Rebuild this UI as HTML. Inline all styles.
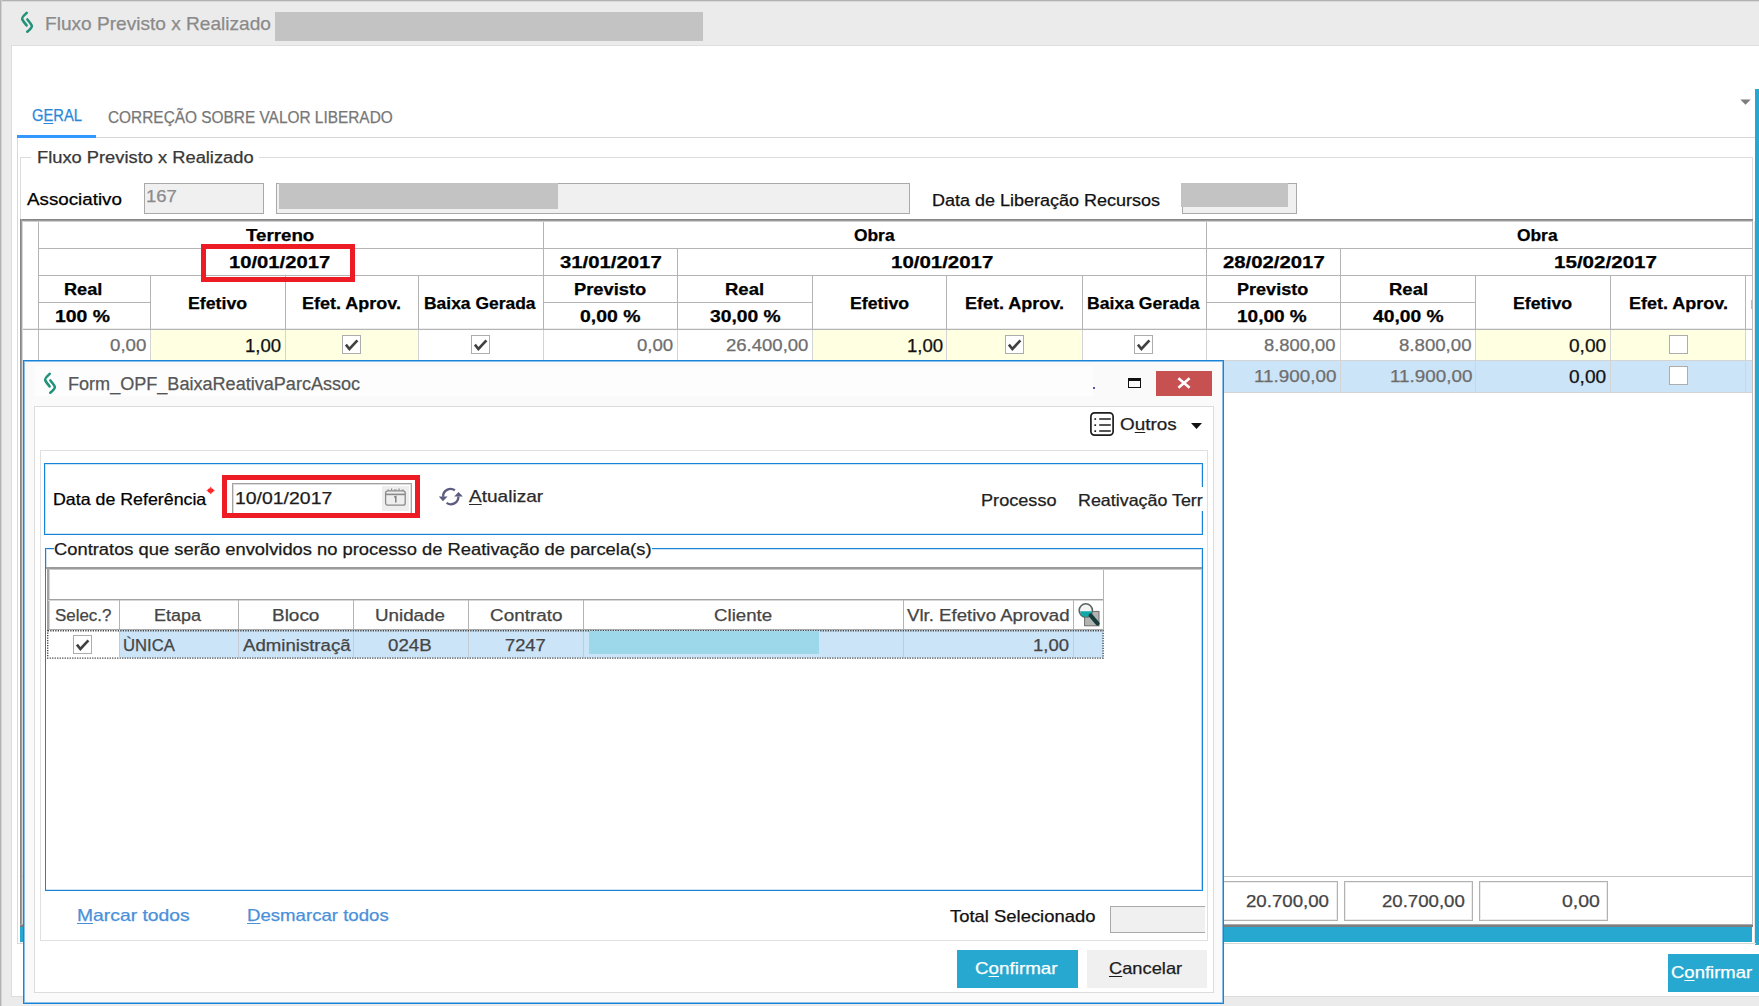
<!DOCTYPE html>
<html><head><meta charset="utf-8"><title>Fluxo Previsto x Realizado</title>
<style>
html,body{margin:0;padding:0}
body{width:1759px;height:1006px;position:relative;overflow:hidden;background:#ebebeb;font-family:'Liberation Sans', sans-serif}
div{position:absolute;box-sizing:border-box}
.t{position:absolute;white-space:nowrap;line-height:1;transform-origin:0 0;font-family:'Liberation Sans', sans-serif;}
u{text-decoration:underline;text-underline-offset:2px;text-decoration-thickness:1px}
svg{position:absolute;overflow:visible}
</style></head>
<body>
<div style="left:0px;top:0px;width:1759px;height:1px;background:#b2b2b2;"></div>
<div style="left:0px;top:1px;width:1759px;height:1px;background:#dadada;"></div>
<div style="left:0px;top:0px;width:1px;height:1006px;background:#b2b2b2;"></div>
<div style="left:1px;top:0px;width:1px;height:1006px;background:#d2d2d2;"></div>
<div style="left:11px;top:45px;width:1748px;height:952px;background:#ffffff;border-left:1px solid #dedede;border-top:1px solid #dedede;border-bottom:1px solid #dcdcdc;"></div>
<svg style="left:0px;top:0px" width="40" height="40" viewBox="0 0 40 40"><g fill="none" stroke="#22917a" stroke-width="2.6" stroke-linecap="round" stroke-linejoin="round"><path d="M26.7 12.9 Q21.0 18.0 22.4 19.6 Q23.4 21.6 26.6 25.4"/><path d="M27.4 19.5 Q30.6 23.4 31.6 25.2 Q33.0 27.0 27.3 31.7"/></g></svg>
<span class="t" style="left:45.00px;top:14px;font-size:19px;color:#8a8a8a;transform:scaleX(1.0045);-webkit-text-stroke:0.25px #8a8a8a;">Fluxo Previsto x Realizado</span>
<div style="left:274.5px;top:12px;width:428px;height:28.5px;background:#c3c3c3;"></div>
<div style="left:1755.4px;top:89px;width:3.6px;height:856px;background:#27a8d0;"></div>
<span class="t" style="left:31.50px;top:107px;font-size:16.5px;color:#2b88d8;transform:scaleX(0.8947);-webkit-text-stroke:0.25px #2b88d8;">G<u>E</u>RAL</span>
<span class="t" style="left:107.75px;top:110px;font-size:16px;color:#777777;transform:scaleX(0.9627);-webkit-text-stroke:0.25px #777777;">CORREÇÃO SOBRE VALOR LIBERADO</span>
<div style="left:96px;top:137px;width:1659px;height:1px;background:#d6d6d6;"></div>
<div style="left:17px;top:135px;width:79px;height:3px;background:#3398fd;"></div>
<svg style="left:1740px;top:99px" width="11" height="6" viewBox="0 0 11 6"><path d="M0.3 0.4 H10.7 L5.5 5.8 Z" fill="#7d7d7d"/></svg>
<div style="left:17px;top:138px;width:1px;height:806px;background:#d9d9d9;"></div>
<div style="left:17px;top:943px;width:1739px;height:1px;background:#d9d9d9;"></div>
<div style="left:20px;top:157px;width:1px;height:787px;background:#dcdcdc;"></div>
<div style="left:20px;top:156.5px;width:1733px;height:1px;background:#dcdcdc;"></div>
<div style="left:1752px;top:157px;width:1px;height:64px;background:#e0e0e0;"></div>
<div style="left:1754px;top:221px;width:1px;height:723px;background:#e6e6e6;"></div>
<div style="left:31px;top:148px;width:228px;height:18px;background:#ffffff;"></div>
<span class="t" style="left:37.00px;top:150px;font-size:16px;color:#383838;transform:scaleX(1.1436);-webkit-text-stroke:0.25px #383838;">Fluxo Previsto x Realizado</span>
<span class="t" style="left:27.00px;top:192px;font-size:16px;color:#000;transform:scaleX(1.1730);-webkit-text-stroke:0.25px #000;">Associativo</span>
<div style="left:144px;top:183px;width:120px;height:31px;background:#f0f0f0;border:1px solid #a9a9a9;"></div>
<span class="t" style="left:146.00px;top:189px;font-size:16px;color:#8c8c8c;transform:scaleX(1.1526);-webkit-text-stroke:0.25px #8c8c8c;">167</span>
<div style="left:276px;top:183px;width:634px;height:31px;background:#f0f0f0;border:1px solid #a9a9a9;"></div>
<div style="left:279px;top:183px;width:279px;height:25.5px;background:#c3c3c3;"></div>
<span class="t" style="left:931.50px;top:193px;font-size:16px;color:#111;transform:scaleX(1.1244);-webkit-text-stroke:0.25px #111;">Data de Liberação Recursos</span>
<div style="left:1182px;top:183px;width:115px;height:31px;background:#f0f0f0;border:1px solid #a9a9a9;"></div>
<div style="left:1180.5px;top:183px;width:107px;height:23.5px;background:#c3c3c3;"></div>
<div style="left:20px;top:219px;width:1733px;height:707px;background:#ffffff;"></div>
<div style="left:151px;top:330px;width:268px;height:30px;background:#ffffe1;"></div>
<div style="left:812px;top:330px;width:270px;height:30px;background:#ffffe1;"></div>
<div style="left:1476px;top:330px;width:270px;height:30px;background:#ffffe1;"></div>
<div style="left:23px;top:361px;width:1729px;height:31px;background:#cce4f7;"></div>
<div style="left:38px;top:248px;width:1714px;height:1px;background:#b4b4b4;"></div>
<div style="left:38px;top:275px;width:1714px;height:1px;background:#b4b4b4;"></div>
<div style="left:22px;top:329px;width:1730px;height:1px;background:#b4b4b4;"></div>
<div style="left:22px;top:328px;width:1730px;height:1px;background:#ececec;"></div>
<div style="left:38px;top:302px;width:112.4px;height:1px;background:#b4b4b4;"></div>
<div style="left:543.4px;top:302px;width:268.6px;height:1px;background:#b4b4b4;"></div>
<div style="left:1206px;top:302px;width:269px;height:1px;background:#b4b4b4;"></div>
<div style="left:37.6px;top:222px;width:1px;height:107px;background:#b4b4b4;"></div>
<div style="left:543.4px;top:222px;width:1px;height:107px;background:#b4b4b4;"></div>
<div style="left:1206px;top:222px;width:1px;height:107px;background:#b4b4b4;"></div>
<div style="left:677px;top:248px;width:1px;height:81px;background:#b4b4b4;"></div>
<div style="left:1340px;top:248px;width:1px;height:81px;background:#b4b4b4;"></div>
<div style="left:150.4px;top:275px;width:1px;height:54px;background:#b4b4b4;"></div>
<div style="left:285.3px;top:275px;width:1px;height:54px;background:#b4b4b4;"></div>
<div style="left:418.3px;top:275px;width:1px;height:54px;background:#b4b4b4;"></div>
<div style="left:812px;top:275px;width:1px;height:54px;background:#b4b4b4;"></div>
<div style="left:946.2px;top:275px;width:1px;height:54px;background:#b4b4b4;"></div>
<div style="left:1082px;top:275px;width:1px;height:54px;background:#b4b4b4;"></div>
<div style="left:1475px;top:275px;width:1px;height:54px;background:#b4b4b4;"></div>
<div style="left:1610px;top:275px;width:1px;height:54px;background:#b4b4b4;"></div>
<div style="left:1745px;top:275px;width:1px;height:54px;background:#b4b4b4;"></div>
<div style="left:150.4px;top:330px;width:1px;height:62px;background:#d4d4d4;"></div>
<div style="left:285.3px;top:330px;width:1px;height:62px;background:#d4d4d4;"></div>
<div style="left:418.3px;top:330px;width:1px;height:62px;background:#d4d4d4;"></div>
<div style="left:543.4px;top:330px;width:1px;height:62px;background:#d4d4d4;"></div>
<div style="left:677px;top:330px;width:1px;height:62px;background:#d4d4d4;"></div>
<div style="left:812px;top:330px;width:1px;height:62px;background:#d4d4d4;"></div>
<div style="left:946.2px;top:330px;width:1px;height:62px;background:#d4d4d4;"></div>
<div style="left:1082px;top:330px;width:1px;height:62px;background:#d4d4d4;"></div>
<div style="left:1206px;top:330px;width:1px;height:62px;background:#d4d4d4;"></div>
<div style="left:1340px;top:330px;width:1px;height:62px;background:#d4d4d4;"></div>
<div style="left:1475px;top:330px;width:1px;height:62px;background:#d4d4d4;"></div>
<div style="left:1610px;top:330px;width:1px;height:62px;background:#d4d4d4;"></div>
<div style="left:1745px;top:330px;width:1px;height:62px;background:#d4d4d4;"></div>
<div style="left:37.6px;top:330px;width:1px;height:62px;background:#bcbcbc;"></div>
<div style="left:22px;top:360px;width:1730px;height:1px;background:#d4d4d4;"></div>
<div style="left:22px;top:392px;width:1730px;height:1px;background:#d4d4d4;"></div>
<div style="left:20px;top:219px;width:1733px;height:1px;background:#868686;"></div>
<div style="left:20px;top:220px;width:1733px;height:1px;background:#9a9a9a;"></div>
<div style="left:22px;top:221px;width:1731px;height:1px;background:#cfcfcf;"></div>
<div style="left:20px;top:219px;width:1px;height:707px;background:#868686;"></div>
<div style="left:21px;top:219px;width:1px;height:707px;background:#9e9e9e;"></div>
<div style="left:22px;top:221px;width:1px;height:705px;background:#d8d8d8;"></div>
<div style="left:1752px;top:221px;width:1px;height:705px;background:#bdbdbd;"></div>
<div style="left:22px;top:876px;width:1730px;height:1px;background:#c4c4c4;"></div>
<div style="left:1209px;top:881px;width:129px;height:39.5px;background:#ffffff;border:1px solid #b2b2b2;box-shadow:inset 0 0 0 1px #ececec;"></div>
<div style="left:1344px;top:881px;width:129px;height:39.5px;background:#ffffff;border:1px solid #b2b2b2;box-shadow:inset 0 0 0 1px #ececec;"></div>
<div style="left:1479px;top:881px;width:129px;height:39.5px;background:#ffffff;border:1px solid #b2b2b2;box-shadow:inset 0 0 0 1px #ececec;"></div>
<div style="left:20px;top:924px;width:1733px;height:1px;background:#a8a8a8;"></div>
<div style="left:20px;top:925px;width:1733px;height:1px;background:#808080;"></div>
<div style="left:20px;top:926px;width:1733px;height:1px;background:#7c7c7c;"></div>
<div style="left:20px;top:927px;width:1732px;height:15px;background:#27a8d0;"></div>
<span class="t" style="left:246.00px;top:227px;font-size:16.5px;color:#000;transform:scaleX(1.1334);font-weight:bold;-webkit-text-stroke:0.25px #000;">Terreno</span>
<span class="t" style="left:853.50px;top:227px;font-size:16.5px;color:#000;transform:scaleX(1.0526);font-weight:bold;-webkit-text-stroke:0.25px #000;">Obra</span>
<span class="t" style="left:1517.25px;top:227px;font-size:16.5px;color:#000;transform:scaleX(1.0526);font-weight:bold;-webkit-text-stroke:0.25px #000;">Obra</span>
<span class="t" style="left:228.50px;top:254px;font-size:16.5px;color:#000;transform:scaleX(1.2247);font-weight:bold;-webkit-text-stroke:0.25px #000;">10/01/2017</span>
<span class="t" style="left:559.50px;top:254px;font-size:16.5px;color:#000;transform:scaleX(1.2318);font-weight:bold;-webkit-text-stroke:0.25px #000;">31/01/2017</span>
<span class="t" style="left:890.50px;top:254px;font-size:16.5px;color:#000;transform:scaleX(1.2396);font-weight:bold;-webkit-text-stroke:0.25px #000;">10/01/2017</span>
<span class="t" style="left:1222.50px;top:254px;font-size:16.5px;color:#000;transform:scaleX(1.2318);font-weight:bold;-webkit-text-stroke:0.25px #000;">28/02/2017</span>
<span class="t" style="left:1554.00px;top:254px;font-size:16.5px;color:#000;transform:scaleX(1.2470);font-weight:bold;-webkit-text-stroke:0.25px #000;">15/02/2017</span>
<span class="t" style="left:64.00px;top:281px;font-size:16.5px;color:#000;transform:scaleX(1.1004);font-weight:bold;-webkit-text-stroke:0.25px #000;">Real</span>
<span class="t" style="left:55.25px;top:308px;font-size:16.5px;color:#000;transform:scaleX(1.1741);font-weight:bold;-webkit-text-stroke:0.25px #000;">100 %</span>
<span class="t" style="left:573.50px;top:281px;font-size:16.5px;color:#000;transform:scaleX(1.1095);font-weight:bold;-webkit-text-stroke:0.25px #000;">Previsto</span>
<span class="t" style="left:579.75px;top:308px;font-size:16.5px;color:#000;transform:scaleX(1.1766);font-weight:bold;-webkit-text-stroke:0.25px #000;">0,00 %</span>
<span class="t" style="left:725.25px;top:281px;font-size:16.5px;color:#000;transform:scaleX(1.1216);font-weight:bold;-webkit-text-stroke:0.25px #000;">Real</span>
<span class="t" style="left:709.50px;top:308px;font-size:16.5px;color:#000;transform:scaleX(1.1667);font-weight:bold;-webkit-text-stroke:0.25px #000;">30,00 %</span>
<span class="t" style="left:1236.50px;top:281px;font-size:16.5px;color:#000;transform:scaleX(1.0938);font-weight:bold;-webkit-text-stroke:0.25px #000;">Previsto</span>
<span class="t" style="left:1237.00px;top:308px;font-size:16.5px;color:#000;transform:scaleX(1.1526);font-weight:bold;-webkit-text-stroke:0.25px #000;">10,00 %</span>
<span class="t" style="left:1389.00px;top:281px;font-size:16.5px;color:#000;transform:scaleX(1.1216);font-weight:bold;-webkit-text-stroke:0.25px #000;">Real</span>
<span class="t" style="left:1372.50px;top:308px;font-size:16.5px;color:#000;transform:scaleX(1.1667);font-weight:bold;-webkit-text-stroke:0.25px #000;">40,00 %</span>
<span class="t" style="left:188.25px;top:295px;font-size:16.5px;color:#000;transform:scaleX(1.0742);font-weight:bold;-webkit-text-stroke:0.25px #000;">Efetivo</span>
<span class="t" style="left:849.50px;top:295px;font-size:16.5px;color:#000;transform:scaleX(1.0742);font-weight:bold;-webkit-text-stroke:0.25px #000;">Efetivo</span>
<span class="t" style="left:1513.25px;top:295px;font-size:16.5px;color:#000;transform:scaleX(1.0742);font-weight:bold;-webkit-text-stroke:0.25px #000;">Efetivo</span>
<span class="t" style="left:302.00px;top:295px;font-size:16.5px;color:#000;transform:scaleX(1.0899);font-weight:bold;-webkit-text-stroke:0.25px #000;">Efet. Aprov.</span>
<span class="t" style="left:965.25px;top:295px;font-size:16.5px;color:#000;transform:scaleX(1.0899);font-weight:bold;-webkit-text-stroke:0.25px #000;">Efet. Aprov.</span>
<span class="t" style="left:1629.00px;top:295px;font-size:16.5px;color:#000;transform:scaleX(1.0899);font-weight:bold;-webkit-text-stroke:0.25px #000;">Efet. Aprov.</span>
<span class="t" style="left:424.00px;top:295px;font-size:16.5px;color:#000;transform:scaleX(1.0572);font-weight:bold;-webkit-text-stroke:0.25px #000;">Baixa Gerada</span>
<span class="t" style="left:1086.50px;top:295px;font-size:16.5px;color:#000;transform:scaleX(1.0667);font-weight:bold;-webkit-text-stroke:0.25px #000;">Baixa Gerada</span>
<div style="left:1750.5px;top:300px;width:1.5px;height:9px;background:#f0b070;"></div>
<span class="t" style="left:110.25px;top:338px;font-size:16px;color:#6e6e6e;transform:scaleX(1.1667);-webkit-text-stroke:0.25px #6e6e6e;">0,00</span>
<span class="t" style="left:637.00px;top:338px;font-size:16px;color:#6e6e6e;transform:scaleX(1.1622);-webkit-text-stroke:0.25px #6e6e6e;">0,00</span>
<span class="t" style="left:726.00px;top:338px;font-size:16px;color:#6e6e6e;transform:scaleX(1.1571);-webkit-text-stroke:0.25px #6e6e6e;">26.400,00</span>
<span class="t" style="left:1264.00px;top:338px;font-size:16px;color:#6e6e6e;transform:scaleX(1.1477);-webkit-text-stroke:0.25px #6e6e6e;">8.800,00</span>
<span class="t" style="left:1399.00px;top:338px;font-size:16px;color:#6e6e6e;transform:scaleX(1.1640);-webkit-text-stroke:0.25px #6e6e6e;">8.800,00</span>
<span class="t" style="left:1253.50px;top:369px;font-size:16px;color:#6e6e6e;transform:scaleX(1.1766);-webkit-text-stroke:0.25px #6e6e6e;">11.900,00</span>
<span class="t" style="left:1389.50px;top:369px;font-size:16px;color:#6e6e6e;transform:scaleX(1.1767);-webkit-text-stroke:0.25px #6e6e6e;">11.900,00</span>
<span class="t" style="left:245.25px;top:338px;font-size:17.5px;color:#111;transform:scaleX(1.0611);-webkit-text-stroke:0.25px #111;">1,00</span>
<span class="t" style="left:906.50px;top:338px;font-size:17.5px;color:#111;transform:scaleX(1.0629);-webkit-text-stroke:0.25px #111;">1,00</span>
<span class="t" style="left:1569.00px;top:338px;font-size:17.5px;color:#111;transform:scaleX(1.0912);-webkit-text-stroke:0.25px #111;">0,00</span>
<span class="t" style="left:1569.00px;top:369px;font-size:17.5px;color:#111;transform:scaleX(1.0912);-webkit-text-stroke:0.25px #111;">0,00</span>
<svg style="left:342.2px;top:334.7px" width="19" height="19" viewBox="0 0 19 19"><rect x="0.5" y="0.5" width="18" height="18" fill="#fff" stroke="#adadad"/><path d="M3.9 9.6 L7.4 14.0 L15.4 5.4" fill="none" stroke="#404040" stroke-width="2.6"/></svg>
<svg style="left:471px;top:334.7px" width="19" height="19" viewBox="0 0 19 19"><rect x="0.5" y="0.5" width="18" height="18" fill="#fff" stroke="#adadad"/><path d="M3.9 9.6 L7.4 14.0 L15.4 5.4" fill="none" stroke="#404040" stroke-width="2.6"/></svg>
<svg style="left:1005.2px;top:334.7px" width="19" height="19" viewBox="0 0 19 19"><rect x="0.5" y="0.5" width="18" height="18" fill="#fff" stroke="#adadad"/><path d="M3.9 9.6 L7.4 14.0 L15.4 5.4" fill="none" stroke="#404040" stroke-width="2.6"/></svg>
<svg style="left:1134px;top:334.7px" width="19" height="19" viewBox="0 0 19 19"><rect x="0.5" y="0.5" width="18" height="18" fill="#fff" stroke="#adadad"/><path d="M3.9 9.6 L7.4 14.0 L15.4 5.4" fill="none" stroke="#404040" stroke-width="2.6"/></svg>
<svg style="left:1668.9px;top:334.9px" width="19" height="19" viewBox="0 0 19 19"><rect x="0.5" y="0.5" width="18" height="18" fill="#fff" stroke="#adadad"/></svg>
<svg style="left:1668.9px;top:366.3px" width="19" height="19" viewBox="0 0 19 19"><rect x="0.5" y="0.5" width="18" height="18" fill="#fff" stroke="#adadad"/></svg>
<span class="t" style="left:1246.00px;top:894px;font-size:16px;color:#444;transform:scaleX(1.1658);-webkit-text-stroke:0.25px #444;">20.700,00</span>
<span class="t" style="left:1381.50px;top:894px;font-size:16px;color:#444;transform:scaleX(1.1629);-webkit-text-stroke:0.25px #444;">20.700,00</span>
<span class="t" style="left:1561.50px;top:894px;font-size:16px;color:#444;transform:scaleX(1.2150);-webkit-text-stroke:0.25px #444;">0,00</span>
<div style="left:201px;top:244px;width:154px;height:38px;border:5px solid #ed1c24;"></div>
<div style="left:1668px;top:954px;width:91px;height:37.5px;background:#27a8d0;"></div>
<span class="t" style="left:1671.00px;top:964px;font-size:16.5px;color:#ffffff;transform:scaleX(1.1195);-webkit-text-stroke:0.25px #ffffff;">C<u>o</u>nfirmar</span>
<div style="left:23px;top:360px;width:1201px;height:644px;background:#fafafa;border:1px solid #1883d7;box-shadow:inset 0 0 0 1px rgba(24,131,215,.5);"></div>
<div style="left:35px;top:366px;width:1058px;height:30px;background:#fdfdfd;"></div>
<svg style="left:23.3px;top:360.6px" width="40" height="40" viewBox="0 0 40 40"><g fill="none" stroke="#22917a" stroke-width="2.6" stroke-linecap="round" stroke-linejoin="round"><path d="M26.7 12.9 Q21.0 18.0 22.4 19.6 Q23.4 21.6 26.6 25.4"/><path d="M27.4 19.5 Q30.6 23.4 31.6 25.2 Q33.0 27.0 27.3 31.7"/></g></svg>
<span class="t" style="left:67.75px;top:375px;font-size:18px;color:#565656;transform:scaleX(1.0035);-webkit-text-stroke:0.25px #565656;">Form_OPF_BaixaReativaParcAssoc</span>
<div style="left:1093px;top:387px;width:1.6px;height:1.8px;background:#5656a8;"></div>
<div style="left:1127.5px;top:378.3px;width:13.8px;height:10.2px;border:1.6px solid #111;border-top-width:3px;"></div>
<div style="left:1156.2px;top:370.6px;width:55.8px;height:25.3px;background:#c75050;"></div>
<svg style="left:1177px;top:377px" width="14" height="12" viewBox="0 0 14 12"><path d="M1.4 1.2 L12.6 10.8 M12.6 1.2 L1.4 10.8" stroke="#fff" stroke-width="2.6" fill="none"/></svg>
<div style="left:34px;top:406px;width:1179.5px;height:586.5px;background:#ffffff;border:1px solid #dcdcdc;"></div>
<svg style="left:1090.3px;top:412.3px" width="24" height="24" viewBox="0 0 24 24"><rect x="0.9" y="0.9" width="22.2" height="22.2" rx="3.6" fill="#fff" stroke="#1e1e1e" stroke-width="1.7"/><g stroke="#1e1e1e" stroke-width="1.5"><path d="M9.2 7 H20.8 M9.2 13.1 H20.8 M9.2 19.1 H20.8"/></g><g fill="#1e1e1e"><rect x="4.4" y="6.2" width="1.7" height="1.7"/><rect x="4.4" y="12.3" width="1.7" height="1.7"/><rect x="4.4" y="18.3" width="1.7" height="1.7"/></g></svg>
<span class="t" style="left:1120.00px;top:416px;font-size:16.5px;color:#1e1e1e;transform:scaleX(1.1460);-webkit-text-stroke:0.25px #1e1e1e;">O<u>u</u>tros</span>
<svg style="left:1190.6px;top:423px" width="11" height="6" viewBox="0 0 11 6"><path d="M0 0 H11 L5.5 6 Z" fill="#111"/></svg>
<div style="left:40px;top:449.5px;width:1167.5px;height:491px;background:#ffffff;border:1px solid #e0e0e0;"></div>
<div style="left:44px;top:462.5px;width:1159px;height:72.5px;border:1px solid #1883d7;box-shadow:inset 0 0 0 1px rgba(24,131,215,.22);"></div>
<span class="t" style="left:52.75px;top:491px;font-size:16.5px;color:#000;transform:scaleX(1.0780);-webkit-text-stroke:0.25px #000;">Data de Referência</span>
<svg style="left:206px;top:486px" width="10" height="10" viewBox="0 0 10 10"><ellipse cx="4.6" cy="4.5" rx="2.9" ry="2.3" fill="#ff1818"/><path d="M4.6 1.6 V7.4 M1.4 4.5 H7.9" stroke="#ff3030" stroke-width="1.6" stroke-linecap="round" opacity=".75"/></svg>
<div style="left:232px;top:483px;width:180px;height:33px;background:#ffffff;border:1px solid #a2a2a2;box-shadow:inset 0 0 0 1px #dcdcdc;"></div>
<div style="left:382px;top:486.2px;width:26.8px;height:25.2px;background:#eeeeee;"></div>
<svg style="left:384px;top:487px" width="24" height="20" viewBox="0 0 24 20"><rect x="1.6" y="3.8" width="19.6" height="14.4" rx="2.2" fill="none" stroke="#8a8a8a" stroke-width="1.3"/><path d="M1.6 7.4 H21.2" stroke="#8a8a8a" stroke-width="1.6"/><path d="M3.4 3 H5.2 M7.6 1.6 V3.6 M10 3 H12.6 M15 1.6 V3.6 M17.6 3 H19.6" stroke="#8a8a8a" stroke-width="1.2"/><path d="M10.2 10.2 L11.8 9.6 V15.4" stroke="#808080" stroke-width="1.5" fill="none"/></svg>
<span class="t" style="left:235.25px;top:490px;font-size:17px;color:#1c1c1c;transform:scaleX(1.1429);-webkit-text-stroke:0.25px #1c1c1c;">10/01/2017</span>
<div style="left:222px;top:475px;width:198px;height:43px;border:5px solid #ed1c24;"></div>
<svg style="left:438px;top:486px" width="26" height="22" viewBox="0 0 26 22"><g fill="none" stroke="#5c5c80" stroke-width="2.3"><path d="M16.9 4.3 A7.5 7.5 0 0 0 5.1 10.8"/><path d="M8.6 16.9 A7.5 7.5 0 0 0 20.4 10.6"/></g><path d="M0.8 10.4 L9.6 10.4 L4.9 15.2 Z" fill="#5c5c80"/><path d="M16.2 10.6 L24.9 10.6 L20.5 6 Z" fill="#5c5c80"/></svg>
<span class="t" style="left:468.75px;top:488px;font-size:17px;color:#2a2a2a;transform:scaleX(1.1213);-webkit-text-stroke:0.25px #2a2a2a;"><u>A</u>tualizar</span>
<span class="t" style="left:980.50px;top:492px;font-size:16.5px;color:#222;transform:scaleX(1.0985);-webkit-text-stroke:0.25px #222;">Processo</span>
<div style="left:1076px;top:487px;width:128.5px;height:24px;background:#ffffff;"></div>
<span class="t" style="left:1077.50px;top:492px;font-size:16.5px;color:#222;transform:scaleX(1.0826);-webkit-text-stroke:0.25px #222;">Reativação Terr</span>
<div style="left:45px;top:548px;width:1158px;height:343px;border:1px solid #1883d7;box-shadow:inset 0 0 0 1px rgba(24,131,215,.22);"></div>
<div style="left:54px;top:540px;width:598px;height:20px;background:#ffffff;"></div>
<span class="t" style="left:54.00px;top:542px;font-size:16px;color:#1a1a1a;transform:scaleX(1.1464);-webkit-text-stroke:0.25px #1a1a1a;">Contratos que serão envolvidos no processo de Reativação de parcela(s)</span>
<div style="left:46px;top:567.5px;width:1156px;height:321.5px;background:#ffffff;"></div>
<div style="left:46px;top:567px;width:1156px;height:2px;background:#9a9a9a;"></div>
<div style="left:48px;top:569px;width:1154px;height:1px;background:#c8c8c8;"></div>
<div style="left:46.5px;top:567px;width:2px;height:62.5px;background:#a4a4a4;"></div>
<div style="left:48.5px;top:569px;width:1px;height:60.5px;background:#d4d4d4;"></div>
<div style="left:1201px;top:569px;width:1px;height:320px;background:#d0d0d0;"></div>
<div style="left:48px;top:599px;width:1056px;height:1px;background:#a2a2a2;"></div>
<div style="left:48px;top:600px;width:1056px;height:1px;background:#d6d6d6;"></div>
<div style="left:48px;top:628.5px;width:1056px;height:1px;background:#a8a8a8;"></div>
<div style="left:1103px;top:570px;width:1px;height:60px;background:#b4b4b4;"></div>
<div style="left:119px;top:600px;width:1px;height:29px;background:#b4b4b4;"></div>
<div style="left:238px;top:600px;width:1px;height:29px;background:#b4b4b4;"></div>
<div style="left:353px;top:600px;width:1px;height:29px;background:#b4b4b4;"></div>
<div style="left:468px;top:600px;width:1px;height:29px;background:#b4b4b4;"></div>
<div style="left:583px;top:600px;width:1px;height:29px;background:#b4b4b4;"></div>
<div style="left:903px;top:600px;width:1px;height:29px;background:#b4b4b4;"></div>
<div style="left:1073px;top:600px;width:1px;height:29px;background:#b4b4b4;"></div>
<div style="left:119.5px;top:630px;width:983px;height:27.5px;background:#cce4f7;"></div>
<div style="left:119px;top:631px;width:1px;height:26px;background:#c3ccd6;"></div>
<div style="left:238px;top:631px;width:1px;height:26px;background:#c3ccd6;"></div>
<div style="left:353px;top:631px;width:1px;height:26px;background:#c3ccd6;"></div>
<div style="left:468px;top:631px;width:1px;height:26px;background:#c3ccd6;"></div>
<div style="left:583px;top:631px;width:1px;height:26px;background:#c3ccd6;"></div>
<div style="left:903px;top:631px;width:1px;height:26px;background:#c3ccd6;"></div>
<div style="left:1073px;top:631px;width:1px;height:26px;background:#c3ccd6;"></div>
<svg style="left:46px;top:629px" width="1060" height="32" viewBox="0 0 1060 32"><rect x="1.7" y="1.7" width="1055.4" height="27.4" fill="none" stroke="#464646" stroke-width="1.4" stroke-dasharray="1.3 1.2"/></svg>
<div style="left:588.75px;top:631.3px;width:230px;height:22.5px;background:#9cd8ea;"></div>
<span class="t" style="left:54.75px;top:608px;font-size:16px;color:#454545;transform:scaleX(1.0571);-webkit-text-stroke:0.25px #454545;">Selec.?</span>
<span class="t" style="left:154.00px;top:608px;font-size:16px;color:#454545;transform:scaleX(1.1222);-webkit-text-stroke:0.25px #454545;">Etapa</span>
<span class="t" style="left:271.50px;top:608px;font-size:16px;color:#454545;transform:scaleX(1.1845);-webkit-text-stroke:0.25px #454545;">Bloco</span>
<span class="t" style="left:375.25px;top:608px;font-size:16px;color:#454545;transform:scaleX(1.1724);-webkit-text-stroke:0.25px #454545;">Unidade</span>
<span class="t" style="left:489.50px;top:608px;font-size:16px;color:#454545;transform:scaleX(1.1807);-webkit-text-stroke:0.25px #454545;">Contrato</span>
<span class="t" style="left:714.00px;top:608px;font-size:16px;color:#454545;transform:scaleX(1.1668);-webkit-text-stroke:0.25px #454545;">Cliente</span>
<span class="t" style="left:907.00px;top:608px;font-size:16px;color:#454545;transform:scaleX(1.1640);-webkit-text-stroke:0.25px #454545;">Vlr. Efetivo Aprovad</span>
<span class="t" style="left:122.75px;top:638px;font-size:16px;color:#454545;transform:scaleX(1.0422);-webkit-text-stroke:0.25px #454545;">ÙNICA</span>
<span class="t" style="left:242.50px;top:638px;font-size:16px;color:#454545;transform:scaleX(1.1632);-webkit-text-stroke:0.25px #454545;">Administraçã</span>
<span class="t" style="left:388.25px;top:638px;font-size:16px;color:#454545;transform:scaleX(1.1670);-webkit-text-stroke:0.25px #454545;">024B</span>
<span class="t" style="left:504.50px;top:638px;font-size:16px;color:#454545;transform:scaleX(1.1432);-webkit-text-stroke:0.25px #454545;">7247</span>
<span class="t" style="left:1033.00px;top:638px;font-size:16px;color:#454545;transform:scaleX(1.1537);-webkit-text-stroke:0.25px #454545;">1,00</span>
<svg style="left:72.6px;top:635.2px" width="19" height="19" viewBox="0 0 19 19"><rect x="0.5" y="0.5" width="18" height="18" fill="#fff" stroke="#adadad"/><path d="M3.9 9.6 L7.4 14.0 L15.4 5.4" fill="none" stroke="#404040" stroke-width="2.6"/></svg>
<svg style="left:1076px;top:602px" width="26" height="26" viewBox="0 0 26 26"><rect x="8.6" y="9.4" width="14.4" height="14.4" fill="#b2b4b2" stroke="#6e6e6e" stroke-width="1"/><circle cx="9.8" cy="8.4" r="6.6" fill="#f4f4f4" stroke="#5a6464" stroke-width="1.6"/><path d="M4.2 9.2 H15.4 A5.6 5.6 0 0 1 4.2 9.2 Z" fill="#10a8a8"/><path d="M14.6 13.4 L21.6 21.6" stroke="#163c3c" stroke-width="4" stroke-linecap="round"/></svg>
<span class="t" style="left:76.50px;top:907px;font-size:16.5px;color:#4a90d9;transform:scaleX(1.1704);-webkit-text-stroke:0.25px #4a90d9;"><u>M</u>arcar todos</span>
<span class="t" style="left:247.25px;top:907px;font-size:16.5px;color:#4a90d9;transform:scaleX(1.1280);-webkit-text-stroke:0.25px #4a90d9;"><u>D</u>esmarcar todos</span>
<span class="t" style="left:949.50px;top:908px;font-size:16.5px;color:#111;transform:scaleX(1.1163);-webkit-text-stroke:0.25px #111;">Total Selecionado</span>
<div style="left:1110px;top:905.5px;width:94.5px;height:27.5px;background:#f0f0f0;border:1px solid #a9a9a9;border-right:none;"></div>
<div style="left:956.8px;top:950px;width:121.2px;height:37.5px;background:#27a8d0;"></div>
<span class="t" style="left:974.75px;top:960px;font-size:16.5px;color:#ffffff;transform:scaleX(1.1390);-webkit-text-stroke:0.25px #ffffff;">C<u>o</u>nfirmar</span>
<div style="left:1087px;top:950px;width:120px;height:37.5px;background:#f0f0f0;"></div>
<span class="t" style="left:1109.00px;top:960px;font-size:16.5px;color:#1c1c1c;transform:scaleX(1.1078);-webkit-text-stroke:0.25px #1c1c1c;"><u>C</u>ancelar</span>
</body></html>
